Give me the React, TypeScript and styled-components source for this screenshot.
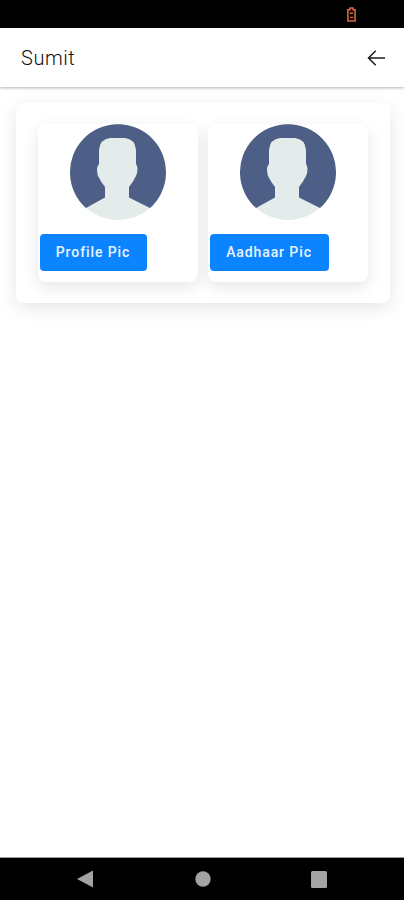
import React from "react";
import styled, { createGlobalStyle } from "styled-components";

const Global = createGlobalStyle`
  html, body { margin: 0; padding: 0; background: #fff; }
  body { font-family: Roboto, "Liberation Sans", sans-serif; }
  * { box-sizing: border-box; }
`;

const Screen = styled.div`
  width: 404px;
  height: 900px;
  display: flex;
  flex-direction: column;
  background: #fff;
  overflow: hidden;
`;

const StatusBar = styled.div`
  height: 28px;
  flex: none;
  background: #000;
  display: flex;
  align-items: center;
  justify-content: flex-end;
  padding: 1px 48px 0 0;
`;

const Header = styled.header`
  height: 59px;
  flex: none;
  background: #fff;
  display: flex;
  align-items: center;
  justify-content: space-between;
  padding: 1px 19px 0 21px;
  box-shadow: 0 1px 3px rgba(0, 0, 0, 0.3);
  position: relative;
  z-index: 1;
`;

const Title = styled.h1`
  margin: 0;
  font-size: 20px;
  font-weight: 300;
  letter-spacing: 0.55px;
  color: #111;
`;

const Content = styled.main`
  flex: 1;
  padding: 16px 14px 0 16px;
  background: #fff;
`;

const OuterCard = styled.section`
  height: 200px;
  display: flex;
  gap: 10px;
  padding: 21px 22px;
  border-radius: 8px;
  background: #fff;
  box-shadow: 0 5px 18px rgba(0, 0, 0, 0.1);
`;

const PicCard = styled.article`
  width: 160px;
  height: 158px;
  display: flex;
  flex-direction: column;
  align-items: flex-start;
  border-radius: 8px;
  background: #fff;
  box-shadow: 0 5px 16px rgba(0, 0, 0, 0.1);
`;

const AvatarWrap = styled.div`
  width: 100%;
  height: 96px;
  display: flex;
  justify-content: center;
  margin-bottom: 14px;
`;

const PicButton = styled.button`
  height: 37px;
  width: ${(p: { $width: number }) => p.$width}px;
  margin-left: 2px;
  border: 0;
  border-radius: 4px;
  padding: 0 1px 2px 0;
  background: #0d84ff;
  color: #eaf4ff;
  font-family: Roboto, "Liberation Sans", sans-serif;
  font-size: 14px;
  font-weight: 500;
  letter-spacing: 0.9px;
`;

const NavBar = styled.nav`
  height: 43px;
  flex: none;
  background: #000;
  border-top: 1px solid #9a9a9a;
  display: flex;
  align-items: center;
  gap: 100px;
  padding-left: 77px;
`;

const Avatar = () => (
  <svg width="96" height="96" viewBox="0 0 96 96">
    <circle cx="48" cy="48" r="48" fill="#e4ebeb" />
    <path
      d="M16 84 A48 48 0 1 1 80 84 L59 73.5 L59 63 Q63 58 66 52 Q67.5 49 67.5 45 Q67.5 42 66 40 L66 26 Q65 15 55 14 L40 14 Q30 15 29 26 L29 40 Q27 42 27 45 Q27 49 28 52 Q31 58 35 63 L35 73.5 Z"
      fill="#4d5f86"
    />
  </svg>
);

const BatteryIcon = () => (
  <svg width="9" height="15" viewBox="0 0 9 15" fill="none">
    <path d="M3 1H6V2.7H8.1V14H0.9V2.7H3Z" stroke="#d9633b" strokeWidth="1.6" />
    <path d="M2.8 6.2H6.2M2.8 10.4H6.2" stroke="#d9633b" strokeWidth="1.4" />
  </svg>
);

const BackArrow = () => (
  <svg width="18" height="16" viewBox="0 0 18 16" fill="none">
    <path d="M18 8H1.5M8.8 0.8L1.5 8L8.8 15.2" stroke="#1c1c1c" strokeWidth="1.5" />
  </svg>
);

const BackIcon = () => (
  <svg width="18" height="18" viewBox="0 0 18 18">
    <path d="M16 0.5V17.5L0 9Z" fill="#a3a3a3" />
  </svg>
);

const HomeIcon = () => (
  <svg width="16" height="16" viewBox="0 0 16 16">
    <circle cx="8" cy="8" r="7.7" fill="#a3a3a3" />
  </svg>
);

const RecentIcon = () => (
  <svg width="16" height="17" viewBox="0 0 16 17">
    <rect width="16" height="17" rx="1.5" fill="#a3a3a3" />
  </svg>
);

export default function App() {
  return (
    <Screen>
      <Global />
      <StatusBar>
        <BatteryIcon />
      </StatusBar>
      <Header>
        <Title>Sumit</Title>
        <BackArrow />
      </Header>
      <Content>
        <OuterCard>
          <PicCard>
            <AvatarWrap>
              <Avatar />
            </AvatarWrap>
            <PicButton $width={107}>Profile Pic</PicButton>
          </PicCard>
          <PicCard>
            <AvatarWrap>
              <Avatar />
            </AvatarWrap>
            <PicButton $width={119}>Aadhaar Pic</PicButton>
          </PicCard>
        </OuterCard>
      </Content>
      <NavBar>
        <BackIcon />
        <HomeIcon />
        <RecentIcon />
      </NavBar>
    </Screen>
  );
}
